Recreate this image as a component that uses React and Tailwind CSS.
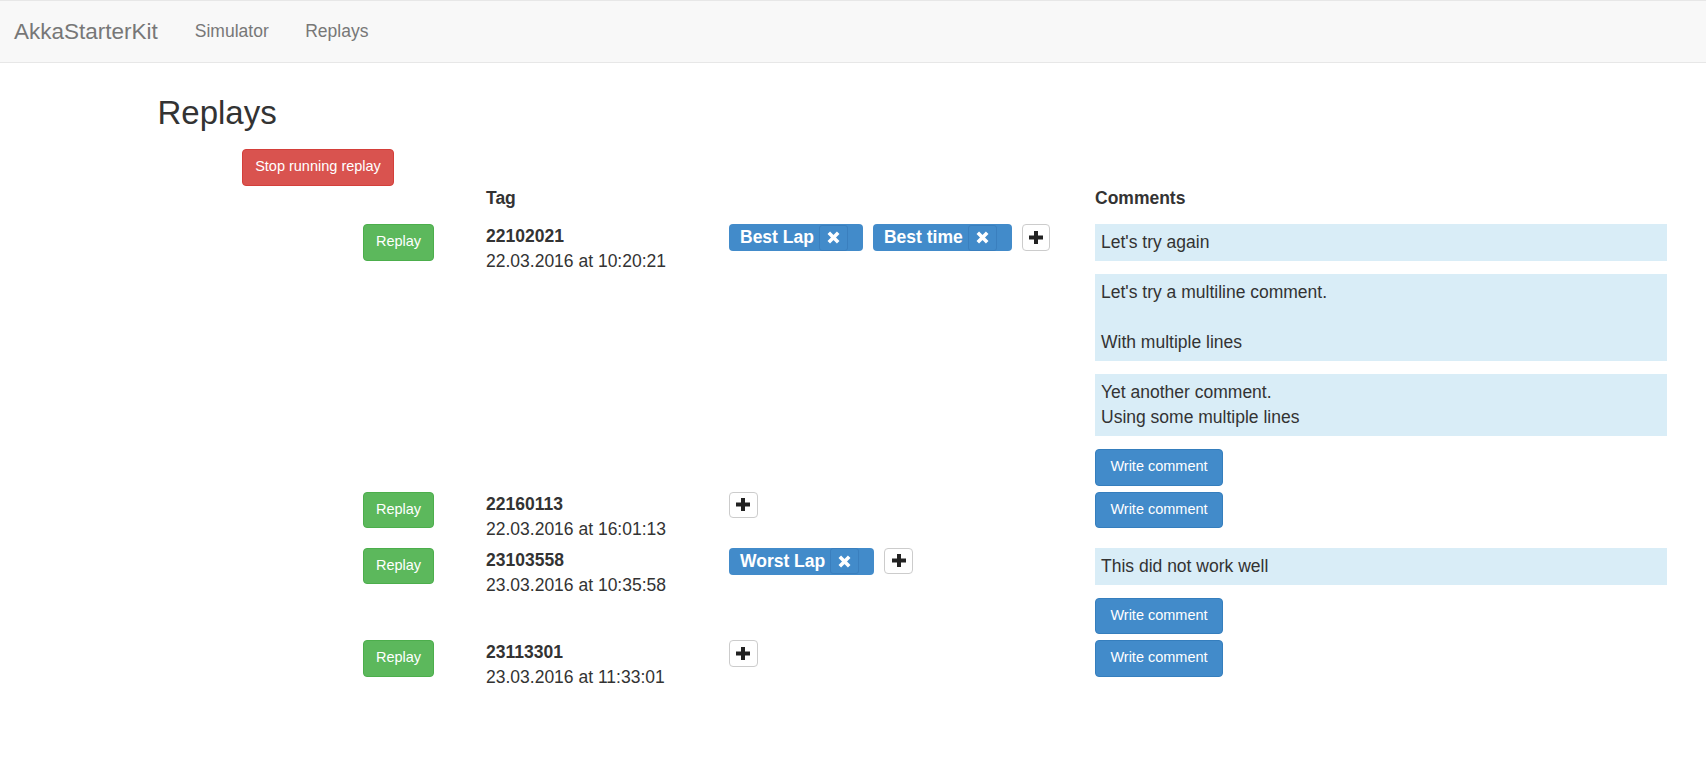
import React from 'react';

const replays = [
  {
    id: '22102021',
    date: '22.03.2016 at 10:20:21',
    tags: ['Best Lap', 'Best time'],
    comments: [
      "Let's try again",
      "Let's try a multiline comment.\n\nWith multiple lines",
      'Yet another comment.\nUsing some multiple lines',
    ],
  },
  { id: '22160113', date: '22.03.2016 at 16:01:13', tags: [], comments: [] },
  { id: '23103558', date: '23.03.2016 at 10:35:58', tags: ['Worst Lap'], comments: ['This did not work well'] },
  { id: '23113301', date: '23.03.2016 at 11:33:01', tags: [], comments: [] },
];

function RemoveIcon() {
  return (
    <svg width="13" height="13" viewBox="0 0 13 13">
      <path d="M1.8 1.8 L11.2 11.2 M11.2 1.8 L1.8 11.2" stroke="#fff" strokeWidth="3.6" />
    </svg>
  );
}

function PlusIcon() {
  return (
    <svg width="14" height="13" viewBox="0 0 14 13" fill="#222">
      <rect x="5" y="0" width="4" height="13" />
      <rect x="0" y="4.5" width="14" height="4" />
    </svg>
  );
}

function Tag({ label }) {
  return (
    <span className="flex h-[27px] items-center rounded-[4px] bg-[#428bca] pl-[11px] pr-[15px] text-[17.5px] font-bold text-white">
      <span>{label}</span>
      <span className="ml-[5px] flex h-[26px] w-[29px] items-center justify-center rounded-[3px] border border-[#3a7fbe]">
        <RemoveIcon />
      </span>
    </span>
  );
}

function AddTagButton() {
  return (
    <button className="flex h-[26.5px] w-[28.5px] items-center justify-center rounded-[4px] border border-[#ccc] bg-white">
      <PlusIcon />
    </button>
  );
}

function ReplayRow({ replay }) {
  return (
    <div className="flex items-start">
      <div className="w-[123px]">
        <button className="h-[36.5px] w-[71px] rounded-[4px] border border-[#4cae4c] bg-[#5cb85c] text-[14.5px] text-white">
          Replay
        </button>
      </div>
      <div className="w-[243px] leading-[25px]">
        <div className="font-bold">{replay.id}</div>
        <div>{replay.date}</div>
      </div>
      <div className="flex w-[366px] items-start gap-[10px]">
        {replay.tags.map((t) => (
          <Tag key={t} label={t} />
        ))}
        <AddTagButton />
      </div>
      <div className="flex w-[572px] flex-col items-start gap-[13px]">
        {replay.comments.map((c, i) => (
          <div key={i} className="w-full whitespace-pre-line bg-[#d9edf7] py-[6px] pl-[6px] leading-[25px]">
            {c}
          </div>
        ))}
        <button className="h-[36.5px] w-[128px] rounded-[4px] border border-[#357ebd] bg-[#428bca] text-[14.5px] text-white">
          Write comment
        </button>
      </div>
    </div>
  );
}

export default function App() {
  return (
    <div className="min-h-[764px] bg-white font-['Liberation_Sans',Arial,sans-serif] text-[17.5px] text-[#333]">
      {/* Navbar */}
      <nav className="flex h-[63px] items-center border-y border-[#e7e7e7] bg-[#f8f8f8] text-[#777]">
        <span className="ml-[14px] text-[22.5px]">AkkaStarterKit</span>
        <span className="ml-[37px]">Simulator</span>
        <span className="ml-[36.5px]">Replays</span>
      </nav>

      <h1 className="ml-[157.5px] mt-[32px] text-[33px] font-normal leading-[36px]">Replays</h1>

      <div className="ml-[242px] mt-[18px]">
        <button className="h-[36.5px] w-[152px] rounded-[4px] border border-[#d43f3a] bg-[#d9534f] text-[14.5px] text-white">
          Stop running replay
        </button>
      </div>

      <div className="ml-[363px]">
        {/* Header */}
        <div className="mt-[0.5px] flex font-bold leading-[25px]">
          <div className="w-[123px]" />
          <div className="w-[243px]">Tag</div>
          <div className="w-[366px]" />
          <div className="w-[572px]">Comments</div>
        </div>

        {/* Rows */}
        <div className="mt-[13px] flex flex-col gap-[6px]">
          {replays.map((r) => (
            <ReplayRow key={r.id} replay={r} />
          ))}
        </div>
      </div>
    </div>
  );
}
